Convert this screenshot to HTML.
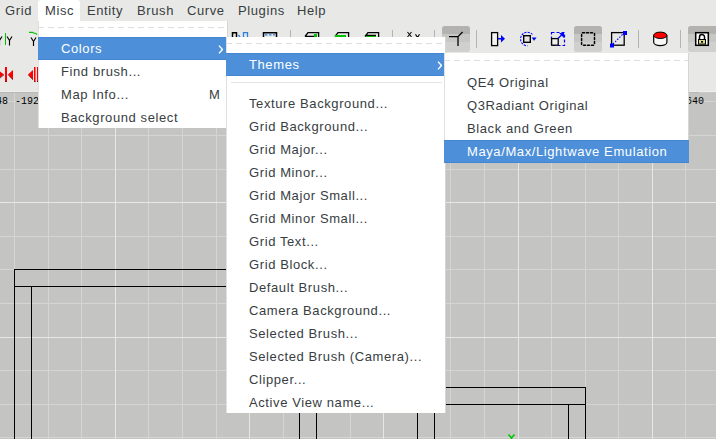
<!DOCTYPE html>
<html><head><meta charset="utf-8"><style>
*{margin:0;padding:0;box-sizing:border-box}
html,body{width:716px;height:439px;overflow:hidden;background:#e8e9e6;font-family:"Liberation Sans",sans-serif;font-size:13px;letter-spacing:0.6px;color:#383d3f}
.abs{position:absolute}
#menubar{position:absolute;left:0;top:0;width:716px;height:21px;background:#e8e9e6}
#menubar span{position:absolute;top:3px;line-height:16px;white-space:nowrap}
#tab{position:absolute;left:38px;top:0;width:42px;height:22px;background:#fff;border-radius:3px 3px 0 0}
#toolbar{position:absolute;left:0;top:21px;width:716px;height:71px;background:#e8e9e6;border-bottom:1px solid #eeefec}
#view{position:absolute;left:0;top:92px;width:716px;height:347px;background:#c4c5c2;overflow:hidden}
#view svg{position:absolute;left:0;top:0}
.ruler{position:absolute;top:4px;font-family:"Liberation Mono",monospace;font-size:10px;line-height:10px;letter-spacing:0;color:#000;transform:scaleY(1.12);transform-origin:0 0}
.menu{position:absolute;background:#fff;overflow:hidden;z-index:2}
.menu:before,.menu:after{content:"";position:absolute;top:0;bottom:0;width:1px;background:#e0e0e0}
.menu:before{left:0}.menu:after{right:0;background:#d6d6d4}
.tear{position:absolute;left:0;right:0;height:1px;background-image:linear-gradient(to right,#dedede 6px,transparent 6px);background-size:10px 1px}
.item{position:absolute;left:0;right:0;height:23px;white-space:nowrap;z-index:1}
.item span{position:absolute;top:4px;line-height:16px}
.hl{background:#4d8fd9;color:#fff;border-top:1px solid #4586d4;border-bottom:1px solid #4586d4}
.hl span{top:3px}
.sep{position:absolute;height:1px;background:#e4e4e4}
.chev{position:absolute;width:5px;height:9px}
.btn{position:absolute;top:26px;width:28px;height:26px;border-radius:3px;background:linear-gradient(#b5b3ae 0,#b5b3ae 7px,#c6c6c3 7px,#c6c6c3 15px,#d0d0cd 15px)}
.tsep{position:absolute;width:1px;background:#b8b8b5}
</style></head><body>
<div id="menubar">
<span style="left:5px">Grid</span>
<div id="tab"></div>
<span style="left:45px">Misc</span>
<span style="left:87px">Entity</span>
<span style="left:137px">Brush</span>
<span style="left:187px">Curve</span>
<span style="left:238px">Plugins</span>
<span style="left:297px">Help</span>
</div>
<div id="toolbar">
</div>
<svg class="abs" style="left:0;top:0" width="716" height="92" viewBox="0 0 716 92">
<g shape-rendering="crispEdges">
<rect x="442" y="26" width="28" height="26" rx="3" fill="#d0d0ce"/>
<rect x="574" y="26" width="28" height="26" rx="3" fill="#d0d0ce"/>
<rect x="688" y="26" width="40" height="26" rx="3" fill="#d0d0ce"/>
</g>
<g>
<path d="M442 34 V29 Q442 26 445 26 H467 Q470 26 470 29 V34 Z" fill="#b4b2ae"/>
<rect x="442" y="34" width="28" height="8" fill="#c7c7c4"/>
<path d="M574 34 V29 Q574 26 577 26 H599 Q602 26 602 29 V34 Z" fill="#b4b2ae"/>
<rect x="574" y="34" width="28" height="8" fill="#c7c7c4"/>
<path d="M688 34 V29 Q688 26 691 26 H725 V34 Z" fill="#b4b2ae"/>
<rect x="688" y="34" width="40" height="8" fill="#c7c7c4"/>
</g>
<g shape-rendering="crispEdges" fill="#b3b3b0">
<rect x="290" y="30" width="1" height="18"/>
<rect x="392" y="30" width="1" height="18"/>
<rect x="434" y="30" width="1" height="18"/>
<rect x="476" y="30" width="1" height="18"/>
<rect x="638" y="30" width="1" height="18"/>
<rect x="680" y="30" width="1" height="18"/>
</g>
<!-- left partial icons row1 -->
<g fill="none" stroke="#000" stroke-width="1.15">
<path d="M-3 36.5 L-0.5 40.5 L2 36.5 M-0.5 40.5 V45.5"/>
<path d="M7 36.5 L9.5 40.5 L12 36.5 M9.5 40.5 V45.5"/>
<path d="M31 37.5 L33.5 41.5 L36 37.5 M33.5 41.5 V46"/>
</g>
<rect x="5" y="33" width="1" height="12" fill="#00c000"/>
<path d="M29 32.4 H32.5 L34 33.3 H35.5 L37.2 34.6" fill="none" stroke="#00c000" stroke-width="1.1"/>
<!-- row 2 red -->
<g fill="#ff0000">
<path d="M-2 70 L4 74.5 L-2 79 Z"/>
<rect x="5" y="67" width="2" height="15"/>
<path d="M8 74.5 L13 70 V80 Z"/>
<path d="M28 74.5 L33 70 V80 Z"/>
<rect x="34" y="67" width="1.5" height="15"/>
<rect x="37" y="67" width="1.5" height="15"/>
</g>
<g fill="none" stroke="#5a1010" stroke-width="0.9" opacity="0.8">
<path d="M4 74.8 L-1 78.8"/>
<path d="M8.3 75 L13 79.6"/>
<path d="M28.3 75 L33 79.6"/>
</g>
<g fill="#601010" opacity="0.7"><rect x="5" y="81" width="2" height="1"/><rect x="34" y="81" width="1.5" height="1"/><rect x="37" y="81" width="1.5" height="1"/></g>
<!-- c -->
<g fill="none" stroke="#000" stroke-width="1.5">
<path d="M232.5 46 V32.7 H236.5 V46"/>
<path d="M263.5 46 V32.7 H276.5 V46"/>
</g>
<g fill="none" stroke="#2f7fdf" stroke-width="1.3">
<path d="M243.5 46 V32.7 H247.5 V46"/>
<path d="M238.5 35 L240 37"/>
<path d="M265 34.8 H275" stroke-dasharray="2.5 1.5"/>
</g>
<!-- e f g boxes -->
<g fill="none" stroke="#000" stroke-width="1.3">
<path d="M305 36.5 L308 32.6 H318.6 V46 M305.3 36.3 H314"/>
<path d="M335 36.5 L338 32.6 H348.6 V46"/>
<path d="M365 36.5 L368 32.6 H378.6 V46 M366 35.3 H376"/>
</g>
<rect x="314" y="34" width="3" height="3" fill="#00c000"/>
<rect x="335" y="35" width="11" height="2" fill="#00c000"/>
<rect x="366" y="36" width="10" height="1" fill="#00c000"/>
<!-- XY -->
<path d="M407.5 32 L411.5 37 M411.5 32 L407.5 37" stroke="#000" stroke-width="1.05"/>
<path d="M415.5 34.3 L417.5 37.5 M419.5 34.3 L417.5 37.5" fill="none" stroke="#000" stroke-width="1.1"/>
<!-- i -->
<path d="M449 36.6 H458 V46 M458 36.6 L462.6 32" fill="none" stroke="#000" stroke-width="1.3"/>
<!-- j move -->
<rect x="491.6" y="32.6" width="6" height="13" fill="#f4f4f4" stroke="#000" stroke-width="1.3"/>
<rect x="498" y="38" width="3" height="1.5" fill="#0000ff"/>
<path d="M501 35 L505 38.7 L501 42.4 Z" fill="#0000ff"/>
<!-- k rotate -->
<path d="M532.5 34.5 A6.8 6.8 0 1 0 527.5 45.8" fill="none" stroke="#0000ff" stroke-width="1.05" stroke-dasharray="2.2 1.1"/>
<path d="M531.6 37.6 H536.6 L534.1 40.8 Z" fill="#0000ff"/>
<rect x="523" y="35" width="8" height="8" fill="#000"/>
<rect x="524.4" y="36.4" width="5.2" height="5.2" fill="#e4e4e2"/>
<!-- l scale -->
<rect x="551.5" y="32.5" width="13" height="13" fill="none" stroke="#0000ff" stroke-width="1.2" stroke-dasharray="3 2"/>
<rect x="551.6" y="38.6" width="6.6" height="6.6" fill="#f0f0f0" stroke="#000" stroke-width="1.3"/>
<path d="M558 38.5 L562 34.5" stroke="#0000ff" stroke-width="1.3"/>
<path d="M559 33 H564 V38 Z" fill="#0000ff"/>
<!-- m dashed sq -->
<path d="M582.5 32.7 H584.5 M586.5 32.7 H588.5 M590.5 32.7 H592.5 M594.5 33.5 V35.5 M594.5 37.5 V39.5 M594.5 41.5 V43.5 M583.5 45.3 H585.5 M587.5 45.3 H589.5 M591.5 45.3 H593.5 M581.6 34.5 V36.5 M581.6 38.5 V40.5 M581.6 42.5 V44.5" fill="none" stroke="#000" stroke-width="1.5" stroke-linecap="round"/>
<!-- n clipper -->
<rect x="611.6" y="32.6" width="12.6" height="12.6" fill="none" stroke="#000" stroke-width="1.3"/>
<path d="M613 44 L623 34" stroke="#0000ff" stroke-width="1.1" stroke-dasharray="1.5 1.5"/>
<rect x="623" y="31" width="4" height="4" fill="#0000ff"/>
<rect x="610" y="43.5" width="4" height="4" fill="#0000ff"/>
<!-- o cylinder -->
<path d="M653.7 35.2 V42.3 A6.6 3.3 0 0 0 666.9 42.3 V35.2" fill="#f8f8f8" stroke="#000" stroke-width="1.2"/>
<ellipse cx="660.3" cy="35.3" rx="6.6" ry="3.2" fill="#ff0000" stroke="#000" stroke-width="1"/>
<!-- p lock -->
<rect x="695.7" y="32.7" width="12.6" height="12.6" fill="#fff" stroke="#000" stroke-width="1.5"/>
<path d="M699.5 39.5 V37 A2.5 2.5 0 0 1 704.5 37 V39.5" fill="none" stroke="#000" stroke-width="1.5"/>
<rect x="698.5" y="39.5" width="7" height="4.6" fill="#dcd88a" stroke="#000" stroke-width="1"/>
<rect x="701" y="41" width="2" height="1.6" fill="#000"/>
</svg>
<div id="view">
<svg width="716" height="347" viewBox="0 0 716 347" shape-rendering="crispEdges"><rect x="0" y="9" width="716" height="1" fill="#d5d6d3"/><rect x="0" y="43" width="716" height="1" fill="#d5d6d3"/><rect x="0" y="77" width="716" height="1" fill="#d5d6d3"/><rect x="0" y="144" width="716" height="1" fill="#d5d6d3"/><rect x="0" y="177" width="716" height="1" fill="#d5d6d3"/><rect x="0" y="211" width="716" height="1" fill="#d5d6d3"/><rect x="0" y="278" width="716" height="1" fill="#d5d6d3"/><rect x="0" y="312" width="716" height="1" fill="#d5d6d3"/><rect x="0" y="345" width="716" height="1" fill="#d5d6d3"/><rect x="14" y="0" width="1" height="439" fill="#d5d6d3"/><rect x="48" y="0" width="1" height="439" fill="#d5d6d3"/><rect x="81" y="0" width="1" height="439" fill="#d5d6d3"/><rect x="148" y="0" width="1" height="439" fill="#d5d6d3"/><rect x="182" y="0" width="1" height="439" fill="#d5d6d3"/><rect x="216" y="0" width="1" height="439" fill="#d5d6d3"/><rect x="283" y="0" width="1" height="439" fill="#d5d6d3"/><rect x="316" y="0" width="1" height="439" fill="#d5d6d3"/><rect x="350" y="0" width="1" height="439" fill="#d5d6d3"/><rect x="417" y="0" width="1" height="439" fill="#d5d6d3"/><rect x="450" y="0" width="1" height="439" fill="#d5d6d3"/><rect x="484" y="0" width="1" height="439" fill="#d5d6d3"/><rect x="551" y="0" width="1" height="439" fill="#d5d6d3"/><rect x="585" y="0" width="1" height="439" fill="#d5d6d3"/><rect x="618" y="0" width="1" height="439" fill="#d5d6d3"/><rect x="685" y="0" width="1" height="439" fill="#d5d6d3"/><rect x="0" y="110" width="716" height="1" fill="#e6e8e4"/><rect x="0" y="245" width="716" height="1" fill="#e6e8e4"/><rect x="115" y="0" width="1" height="439" fill="#e6e8e4"/><rect x="249" y="0" width="1" height="439" fill="#e6e8e4"/><rect x="383" y="0" width="1" height="439" fill="#e6e8e4"/><rect x="518" y="0" width="1" height="439" fill="#e6e8e4"/><rect x="652" y="0" width="1" height="439" fill="#e6e8e4"/><rect x="14" y="177" width="316" height="1" fill="#000"/><rect x="14" y="194" width="316" height="1" fill="#000"/><rect x="14" y="177" width="1" height="170" fill="#000"/><rect x="31" y="194" width="1" height="153" fill="#000"/><rect x="400" y="295" width="186" height="1" fill="#000"/><rect x="400" y="312" width="186" height="1" fill="#000"/><rect x="585" y="295" width="1" height="52" fill="#000"/><rect x="568" y="312" width="1" height="35" fill="#000"/><rect x="299" y="308" width="1" height="39" fill="#000"/><rect x="316" y="308" width="1" height="39" fill="#000"/><rect x="417" y="308" width="1" height="39" fill="#000"/><rect x="434" y="308" width="1" height="39" fill="#000"/><rect x="0" y="0" width="699" height="1" fill="#b8b8b4"/><rect x="699" y="0" width="20" height="1" fill="#c9c9c6"/><path d="M508.5 434.5 L511.5 438 M514.5 434.5 L511.5 438 V440" transform="translate(0,-92)" fill="none" stroke="#00c800" stroke-width="1.6" shape-rendering="auto"/></svg>
<div class="ruler" style="left:-16px">-248</div>
<div class="ruler" style="left:15px">-192</div>
<div class="ruler" style="left:686px">640</div>
</div>
<div class="menu" style="left:38px;top:21px;width:190px;height:107px"><div class="tear" style="top:6px"></div><div class="item hl" style="top:16px"><span style="left:23px">Colors</span><svg class="chev" style="left:180px;top:7px" viewBox="0 0 5 9"><path d="M1 0.6 L4.4 4.5 L1 8.4" fill="none" stroke="#fff" stroke-width="1.4"/></svg></div><div class="item" style="top:39px"><span style="left:23px">Find brush...</span></div><div class="item" style="top:62px"><span style="left:23px">Map Info...</span><span style="left:171px">M</span></div><div class="item" style="top:85px"><span style="left:23px">Background select</span></div></div><div class="menu" style="left:226px;top:37px;width:220px;height:376px"><div class="tear" style="top:6px"></div><div class="item hl" style="top:16px"><span style="left:23px">Themes</span><svg class="chev" style="left:211px;top:7px" viewBox="0 0 5 9"><path d="M1 0.6 L4.4 4.5 L1 8.4" fill="none" stroke="#fff" stroke-width="1.4"/></svg></div><div class="sep" style="top:45px;left:5px;width:211px"></div><div class="item" style="top:55px"><span style="left:23px">Texture Background...</span></div><div class="item" style="top:78px"><span style="left:23px">Grid Background...</span></div><div class="item" style="top:101px"><span style="left:23px">Grid Major...</span></div><div class="item" style="top:124px"><span style="left:23px">Grid Minor...</span></div><div class="item" style="top:147px"><span style="left:23px">Grid Major Small...</span></div><div class="item" style="top:170px"><span style="left:23px">Grid Minor Small...</span></div><div class="item" style="top:193px"><span style="left:23px">Grid Text...</span></div><div class="item" style="top:216px"><span style="left:23px">Grid Block...</span></div><div class="item" style="top:239px"><span style="left:23px">Default Brush...</span></div><div class="item" style="top:262px"><span style="left:23px">Camera Background...</span></div><div class="item" style="top:285px"><span style="left:23px">Selected Brush...</span></div><div class="item" style="top:308px"><span style="left:23px">Selected Brush (Camera)...</span></div><div class="item" style="top:331px"><span style="left:23px">Clipper...</span></div><div class="item" style="top:354px"><span style="left:23px">Active View name...</span></div></div><div class="menu" style="left:444px;top:53px;width:245px;height:110px"><div class="tear" style="top:7px"></div><div class="item" style="top:18px"><span style="left:23px">QE4 Original</span></div><div class="item" style="top:41px"><span style="left:23px">Q3Radiant Original</span></div><div class="item" style="top:64px"><span style="left:23px">Black and Green</span></div><div class="item hl" style="top:87px"><span style="left:23px">Maya/Max/Lightwave Emulation</span></div></div></body></html>
